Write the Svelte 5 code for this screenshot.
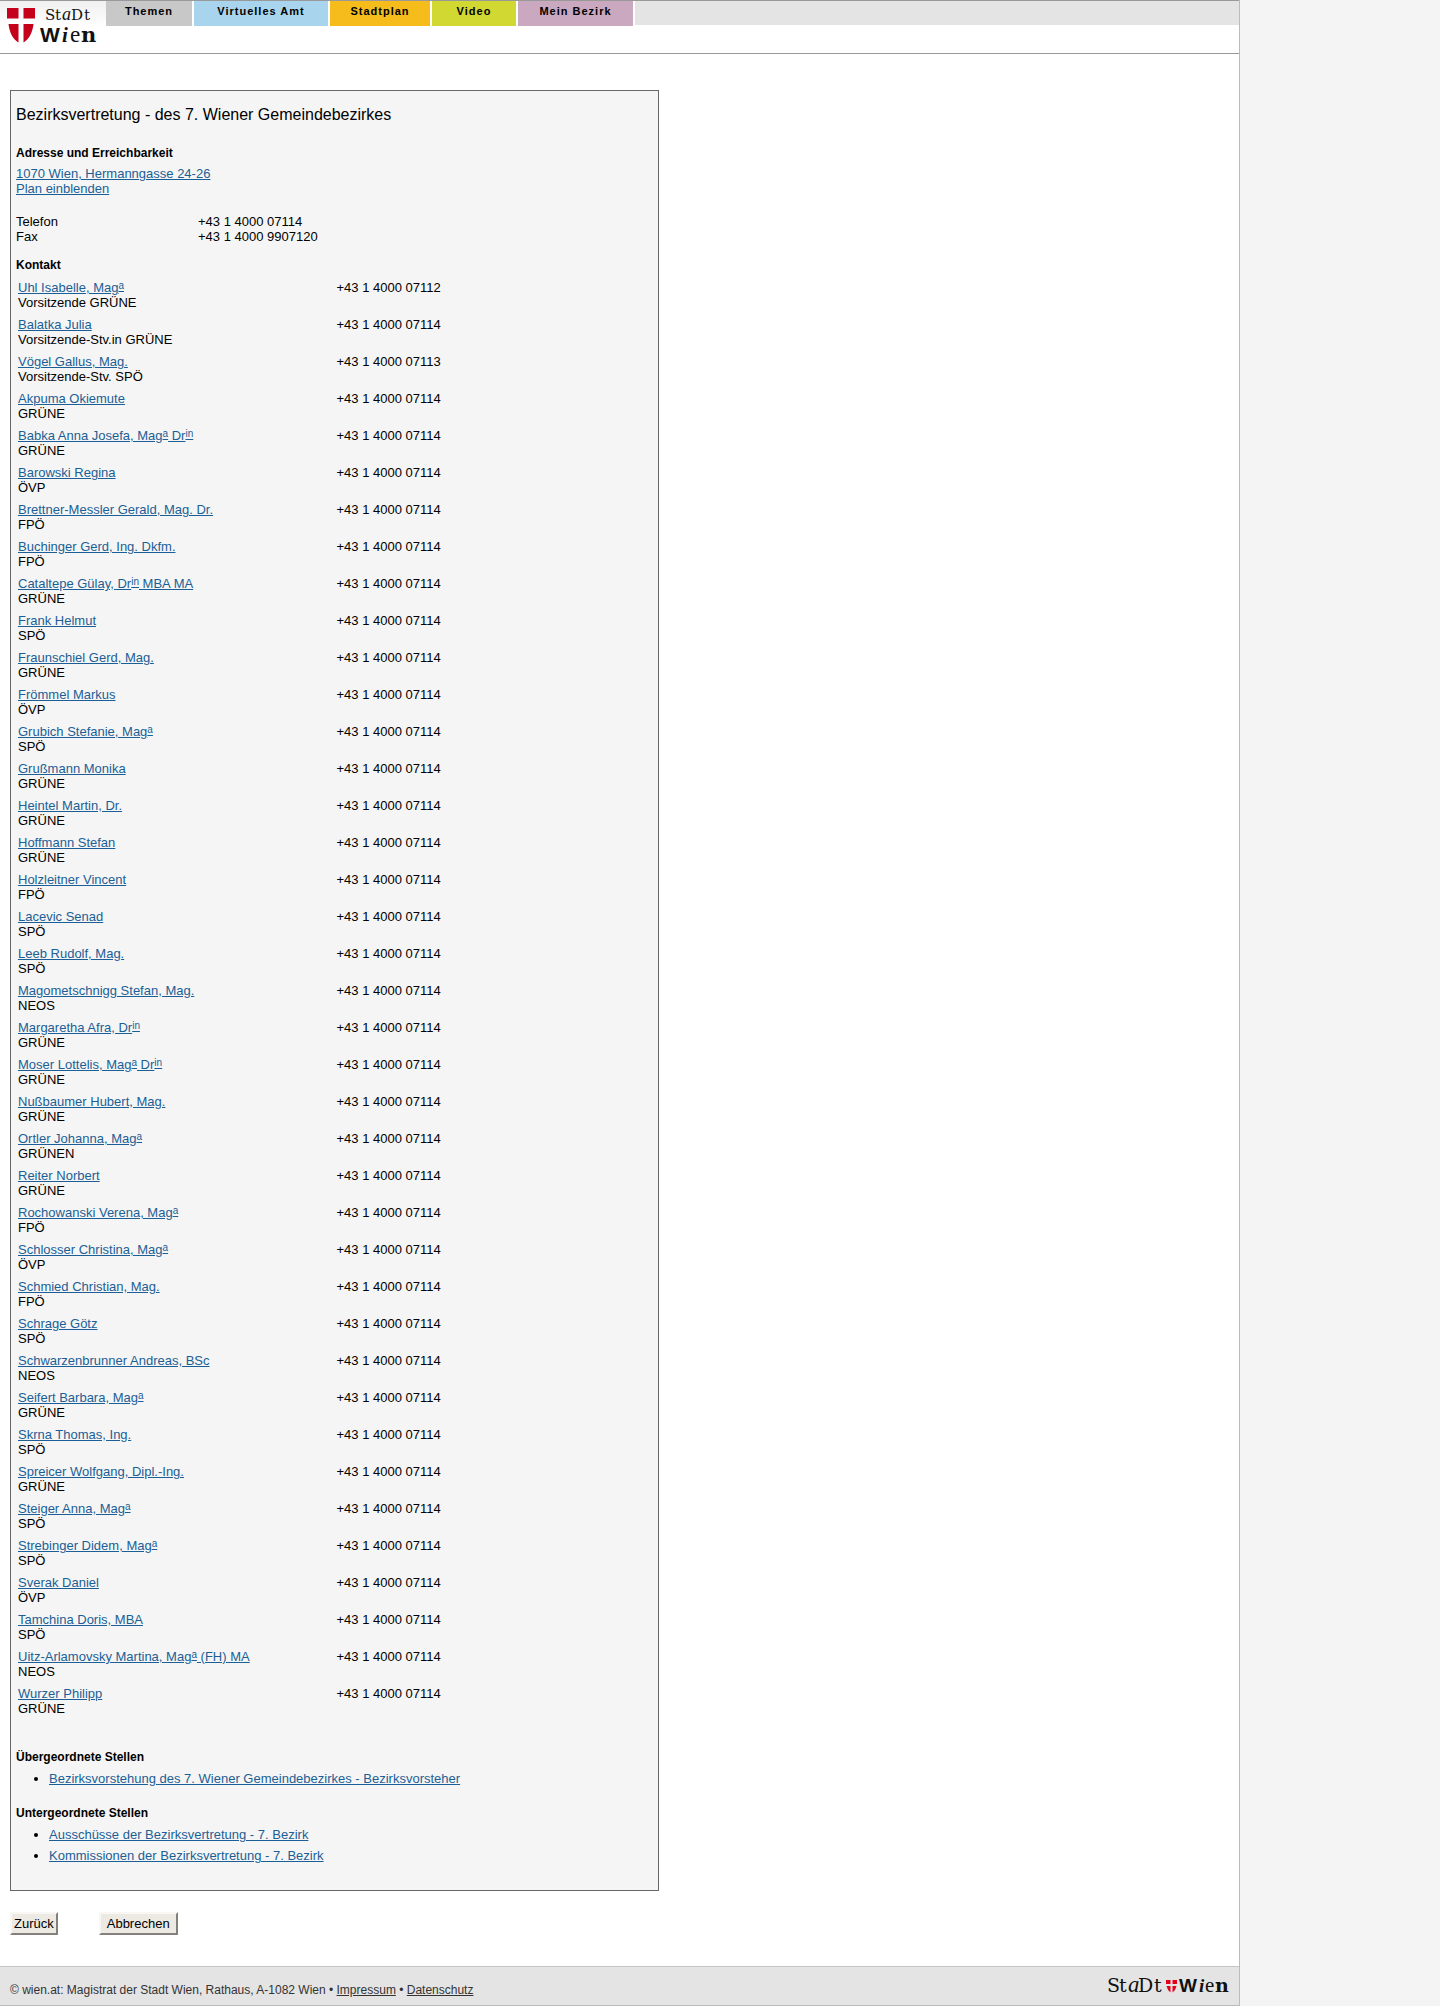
<script>
  const tabs = [
    { label: 'Themen', name: 'themen' },
    { label: 'Virtuelles Amt', name: 'amt' },
    { label: 'Stadtplan', name: 'stadtplan' },
    { label: 'Video', name: 'video' },
    { label: 'Mein Bezirk', name: 'bezirk' }
  ];

  // "^a" and "^in" mark the raised endings of academic titles
  const contacts = [
    ['Uhl Isabelle, Mag^a', 'Vorsitzende GRÜNE', '07112'],
    ['Balatka Julia', 'Vorsitzende-Stv.in GRÜNE'],
    ['Vögel Gallus, Mag.', 'Vorsitzende-Stv. SPÖ', '07113'],
    ['Akpuma Okiemute', 'GRÜNE'],
    ['Babka Anna Josefa, Mag^a Dr^in', 'GRÜNE'],
    ['Barowski Regina', 'ÖVP'],
    ['Brettner-Messler Gerald, Mag. Dr.', 'FPÖ'],
    ['Buchinger Gerd, Ing. Dkfm.', 'FPÖ'],
    ['Cataltepe Gülay, Dr^in MBA MA', 'GRÜNE'],
    ['Frank Helmut', 'SPÖ'],
    ['Fraunschiel Gerd, Mag.', 'GRÜNE'],
    ['Frömmel Markus', 'ÖVP'],
    ['Grubich Stefanie, Mag^a', 'SPÖ'],
    ['Grußmann Monika', 'GRÜNE'],
    ['Heintel Martin, Dr.', 'GRÜNE'],
    ['Hoffmann Stefan', 'GRÜNE'],
    ['Holzleitner Vincent', 'FPÖ'],
    ['Lacevic Senad', 'SPÖ'],
    ['Leeb Rudolf, Mag.', 'SPÖ'],
    ['Magometschnigg Stefan, Mag.', 'NEOS'],
    ['Margaretha Afra, Dr^in', 'GRÜNE'],
    ['Moser Lottelis, Mag^a Dr^in', 'GRÜNE'],
    ['Nußbaumer Hubert, Mag.', 'GRÜNE'],
    ['Ortler Johanna, Mag^a', 'GRÜNEN'],
    ['Reiter Norbert', 'GRÜNE'],
    ['Rochowanski Verena, Mag^a', 'FPÖ'],
    ['Schlosser Christina, Mag^a', 'ÖVP'],
    ['Schmied Christian, Mag.', 'FPÖ'],
    ['Schrage Götz', 'SPÖ'],
    ['Schwarzenbrunner Andreas, BSc', 'NEOS'],
    ['Seifert Barbara, Mag^a', 'GRÜNE'],
    ['Skrna Thomas, Ing.', 'SPÖ'],
    ['Spreicer Wolfgang, Dipl.-Ing.', 'GRÜNE'],
    ['Steiger Anna, Mag^a', 'SPÖ'],
    ['Strebinger Didem, Mag^a', 'SPÖ'],
    ['Sverak Daniel', 'ÖVP'],
    ['Tamchina Doris, MBA', 'SPÖ'],
    ['Uitz-Arlamovsky Martina, Mag^a (FH) MA', 'NEOS'],
    ['Wurzer Philipp', 'GRÜNE']
  ];

  function split(name) {
    return name.split(/(\^a|\^in)/);
  }
</script>

<div class="page">
  <header>
    <a class="logo" href="#wien" aria-label="Stadt Wien">
      <svg width="106" height="52" viewBox="0 0 106 52">
        <path
          fill="#c4001a"
          d="M7 7h11.500v10.500H7zM23.500 7h11.500v10.500H23.500zM8.500 23h10v18.500C12.500 38 9.500 31 8.500 23zM23.500 23h10C32.500 31 29.500 38 23.500 41.500z"
        />
        <g fill="#111">
          <text class="slab" font-size="15" y="19"><tspan x="45">S</tspan><tspan x="55">t</tspan><tspan class="round" x="62">a</tspan><tspan x="71">D</tspan><tspan x="84">t</tspan></text>
          <text class="heavy" font-size="21" y="41"><tspan x="40" class="wide">W</tspan><tspan class="lean" x="62">i</tspan><tspan class="thin" x="70">e</tspan><tspan x="81">n</tspan></text>
        </g>
      </svg>
    </a>
    <nav>
      {#each tabs as tab}
        <a class="tab {tab.name}" href="#{tab.name}">{tab.label}</a>
      {/each}
      <span class="rest"></span>
    </nav>
  </header>

  <main>
    <section class="box">
      <h1>Bezirksvertretung - des 7. Wiener Gemeindebezirkes</h1>

      <h2>Adresse und Erreichbarkeit</h2>
      <p class="address">
        <a href="#adresse">1070 Wien, Hermanngasse 24-26</a><br />
        <a href="#plan">Plan einblenden</a>
      </p>
      <dl>
        <dt>Telefon</dt>
        <dd>+43 1 4000 07114</dd>
        <dt>Fax</dt>
        <dd>+43 1 4000 9907120</dd>
      </dl>

      <h2>Kontakt</h2>
      <table>
        <tbody>
          {#each contacts as [name, party, ext = '07114']}
            <tr>
              <td class="name">
                <a href="#person">{#each split(name) as part}{#if part.startsWith('^')}<sup>{part.slice(1)}</sup>{:else}{part}{/if}{/each}</a><br />
                {party}
              </td>
              <td>+43 1 4000 {ext}</td>
            </tr>
          {/each}
        </tbody>
      </table>

      <h2>Übergeordnete Stellen</h2>
      <ul>
        <li><a href="#vorstehung">Bezirksvorstehung des 7. Wiener Gemeindebezirkes - Bezirksvorsteher</a></li>
      </ul>

      <h2>Untergeordnete Stellen</h2>
      <ul>
        <li><a href="#ausschuesse">Ausschüsse der Bezirksvertretung - 7. Bezirk</a></li>
        <li><a href="#kommissionen">Kommissionen der Bezirksvertretung - 7. Bezirk</a></li>
      </ul>
    </section>

    <div class="buttons">
      <button type="button" class="back">Zurück</button>
      <button type="button">Abbrechen</button>
    </div>
  </main>

  <footer>
    <p>
      © wien.at: Magistrat der Stadt Wien, Rathaus, A-1082 Wien •
      <a href="#impressum">Impressum</a> • <a href="#datenschutz">Datenschutz</a>
    </p>
    <svg width="130" height="36" viewBox="-2 -8 130 36" role="img" aria-label="Stadt Wien">
      <g fill="#111">
        <text class="slab" font-size="19" y="15"><tspan x="0">S</tspan><tspan x="12">t</tspan><tspan class="round" x="21">a</tspan><tspan x="31">D</tspan><tspan x="47">t</tspan></text>
        <text class="heavy" font-size="19" y="15"><tspan x="72" class="wide">W</tspan><tspan class="lean" x="92">i</tspan><tspan class="thin" x="98">e</tspan><tspan x="108">n</tspan></text>
      </g>
      <path fill="#e3001b" d="M59 3h4.500v4H59zM65.500 3H70v4h-4.500zM59.500 9h4v6.500q-3-2-4-6.500zM65.500 9h4q-1 4.500-4 6.500z" />
    </svg>
  </footer>
</div>

<style>
  :global(body) {
    background: #f4f4f4;
  }

  .page {
    box-sizing: border-box;
    max-width: 1240px;
    border-right: 1px solid #bbb;
    background: #fff;
    color: #000;
    font-family: "Liberation Sans", Arial, sans-serif;
    font-size: 13px;
    line-height: 15px;
  }

  header {
    display: flex;
    height: 52px;
    border-top: 1px solid #999;
    border-bottom: 1px solid #999;
  }

  .logo {
    width: 106px;
    background: linear-gradient(#f0f0f0, #fff 26px);
  }

  .logo svg {
    display: block;
  }

  .slab { font-family: "DejaVu Serif", serif; }
  .round { font-family: "Liberation Serif", serif; font-style: italic; font-size: 120%; }
  .heavy { font-family: "DejaVu Serif", serif; font-weight: bold; }
  .wide { font-family: "Liberation Sans", sans-serif; }
  .lean { font-family: "Liberation Serif", serif; font-style: italic; }
  .thin { font-family: "Liberation Serif", serif; font-weight: normal; font-size: 110%; }

  nav {
    display: flex;
    flex: 1;
    gap: 2px;
    align-items: flex-start;
  }

  .tab {
    height: 25px;
    color: #000;
    font-size: 11px;
    font-weight: bold;
    line-height: 20px;
    letter-spacing: 1px;
    text-align: center;
    text-decoration: none;
  }

  .themen { width: 86px; background: #c8c8c8; }
  .amt { width: 134px; background: #a8d4ee; }
  .stadtplan { width: 100px; background: #f5bc1c; }
  .video { width: 84px; background: #d2d832; }
  .bezirk { width: 115px; background: #c9a8c0; }

  .rest {
    flex: 1;
    height: 24px;
    background: #e4e4e4;
  }

  main {
    padding: 36px 10px 31px;
  }

  .box {
    box-sizing: border-box;
    max-width: 649px;
    padding: 15px 5px 7px;
    border: 1px solid #666;
    background: #f5f5f5;
  }

  h1 {
    margin: 0 0 22px;
    font-size: 16px;
    font-weight: normal;
    line-height: 18px;
  }

  h2 {
    margin: 0 0 5px;
    font-size: 12px;
    font-weight: bold;
  }

  a {
    color: #1b5f96;
  }

  .address {
    margin: 0 0 18px;
  }

  dl {
    display: grid;
    grid-template-columns: 182px 1fr;
    margin: 0 0 14px;
  }

  dd {
    margin: 0;
  }

  table {
    width: 100%;
    margin-bottom: 29px;
    border-collapse: collapse;
  }

  td {
    padding: 2px 2px 5px;
    vertical-align: top;
  }

  .name {
    width: 50%;
  }

  sup {
    display: inline-block;
    font-size: 10px;
    line-height: 10px;
    text-decoration: underline;
    text-underline-offset: 2px;
    vertical-align: 3px;
  }

  ul {
    margin: 6px 0 20px;
    padding-left: 33px;
  }

  li {
    margin-bottom: 6px;
  }

  .buttons {
    display: flex;
    gap: 41px;
    margin-top: 21px;
  }

  button {
    height: 23px;
    padding: 0 6px;
    border: 2px solid;
    border-color: #f8f7f4 #84807c #84807c #f8f7f4;
    background: #ede9e3;
    color: #000;
    font: inherit;
  }

  .back {
    padding: 0 2px;
  }

  footer {
    display: flex;
    align-items: flex-start;
    justify-content: space-between;
    height: 38px;
    padding: 0 4px 0 10px;
    border-top: 1px solid #c4c4c4;
    border-bottom: 1px solid #bbb;
    background: #e4e4e4;
    color: #333;
    font-size: 12px;
  }

  footer p {
    margin: 16px 0 0;
  }

  footer a {
    color: #333;
  }

  footer svg {
    margin-top: 2px;
  }
</style>
